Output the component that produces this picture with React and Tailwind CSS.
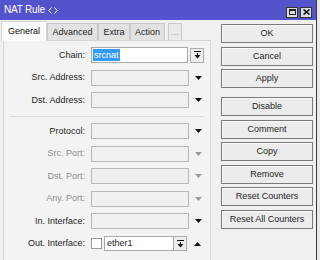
import React from 'react'

function DownArrow({ muted }) {
  return (
    <svg width="7" height="4" viewBox="0 0 7 4">
      <path d="M0 0h7L3.5 4z" fill={muted ? '#9a9a9a' : '#111'} />
    </svg>
  )
}

function UpArrow() {
  return (
    <svg width="7" height="4" viewBox="0 0 7 4">
      <path d="M0 4h7L3.5 0z" fill="#111" />
    </svg>
  )
}

function DropIcon() {
  return (
    <svg width="7" height="8" viewBox="0 0 7 8">
      <path d="M0 0.5h7" stroke="#111" strokeWidth="1" />
      <path d="M3.5 2v3" stroke="#111" strokeWidth="1" />
      <path d="M0.5 4h6L3.5 7.5z" fill="#111" />
    </svg>
  )
}

function Row({ label, muted, children }) {
  return (
    <div className="flex items-center h-[16px]">
      <span className={`w-[81px] text-right whitespace-nowrap ${muted ? 'text-[#8d8d8d]' : 'text-[#1e1e1e]'}`}>{label}</span>
      <div className="ml-[6px] flex items-center">{children}</div>
    </div>
  )
}

function EmptyField({ muted }) {
  return (
    <>
      <div className="w-[98px] h-[16px] border border-[#b9b9b9] bg-[#f0f0f0]" />
      <div className="w-[18px] flex justify-center">
        <DownArrow muted={muted} />
      </div>
    </>
  )
}

function Btn({ children }) {
  return (
    <div className="h-[19px] w-[92px] border border-[#7a7a7a] bg-[#ececec] flex items-center justify-center text-[#1e1e1e] shadow-[inset_1px_1px_0_#fbfbfb]">
      {children}
    </div>
  )
}

function Tab({ children, w, active, dim }) {
  if (active) {
    return (
      <div className={`${w} h-[20px] bg-[#fafafa] border border-[#d2d2d2] border-b-0 flex items-center justify-center text-[#111] relative z-10 -mb-[1px]`}>
        {children}
      </div>
    )
  }
  return (
    <div className={`${w} h-[17px] border border-[#c9c9c9] border-b-0 flex items-center justify-center ${dim ? 'bg-[#e9e9e9] text-[#a0a0a0]' : 'bg-[#e2e2e2] text-[#1e1e1e]'}`}>
      {children}
    </div>
  )
}

export default function App() {
  return (
    <div className="w-[320px] h-[260px] overflow-hidden flex bg-[#f0f0f0] font-['Liberation_Sans',Arial,sans-serif] text-[9px] leading-none">
      <div className="w-[317px] flex flex-col border-r border-[#3a3a3a] shrink-0">
        <div className="h-[20px] bg-[#5353cc] flex items-center pl-[4px] pr-[4px] shrink-0">
          <span className="text-white text-[10px] tracking-[-0.2px]">NAT Rule</span>
          <svg className="ml-[3px]" width="10" height="7" viewBox="0 0 10 7">
            <path d="M3.5 0.5L0.8 3.5L3.5 6.5M6.5 0.5L9.2 3.5L6.5 6.5" stroke="#fff" strokeWidth="1" fill="none" />
          </svg>
          <div className="ml-auto flex gap-[2px] mt-[4px]">
            <div className="w-[12px] h-[11px] bg-[#dcdcdc] border border-[#333] flex items-center justify-center">
              <div className="w-[7px] h-[6px] border border-[#222] border-t-2" />
            </div>
            <div className="w-[12px] h-[11px] bg-[#dcdcdc] border border-[#333] flex items-center justify-center">
              <svg width="7" height="6" viewBox="0 0 7 6">
                <path d="M0.5 0.5L6.5 5.5M6.5 0.5L0.5 5.5" stroke="#111" strokeWidth="1.6" />
              </svg>
            </div>
          </div>
        </div>
        <div className="flex flex-1 min-h-0">
          <div className="w-[211px] pl-[1px] flex flex-col">
            <div className="h-[20px] flex items-end shrink-0">
              <Tab w="w-[46px]" active>General</Tab>
              <Tab w="w-[51px]">Advanced</Tab>
              <Tab w="w-[32px]">Extra</Tab>
              <Tab w="w-[35px]">Action</Tab>
              <div className="ml-[3px]">
                <Tab w="w-[14px]" dim>...</Tab>
              </div>
            </div>
            <div className="ml-[2px] flex-1 border border-[#d6d6d6] border-b-0 bg-[#f3f3f3] pt-[6px] flex flex-col">
              <div className="flex flex-col gap-[6.5px]">
                <Row label="Chain:">
                  <div className="w-[97px] h-[16px] border border-[#a9a9a9] bg-white flex items-center pl-[1px]">
                    <span className="bg-[#3399ff] text-white px-[1px] h-[12px] flex items-center">srcnat</span>
                  </div>
                  <div className="ml-[2px] w-[14px] h-[15px] border border-[#adadad] bg-[#eeeeee] flex items-center justify-center">
                    <DropIcon />
                  </div>
                </Row>
                <Row label="Src. Address:">
                  <EmptyField />
                </Row>
                <Row label="Dst. Address:">
                  <EmptyField />
                </Row>
              </div>
              <div className="mx-[6px] mt-[8px] mb-[6px] border-t border-[#dadada]" />
              <div className="flex flex-col gap-[6.5px]">
                <Row label="Protocol:">
                  <EmptyField />
                </Row>
                <Row label="Src. Port:" muted>
                  <EmptyField muted />
                </Row>
                <Row label="Dst. Port:" muted>
                  <EmptyField muted />
                </Row>
                <Row label="Any. Port:" muted>
                  <EmptyField muted />
                </Row>
                <Row label="In. Interface:">
                  <EmptyField />
                </Row>
                <Row label="Out. Interface:">
                  <div className="w-[11px] h-[11px] border border-[#9a9a9a] bg-white" />
                  <div className="ml-[2px] w-[70px] h-[15px] border border-[#a9a9a9] bg-white flex items-center pl-[2px] text-[#1e1e1e]">ether1</div>
                  <div className="w-[13px] h-[15px] border border-[#adadad] border-l-0 bg-[#eeeeee] flex items-center justify-center">
                    <DropIcon />
                  </div>
                  <div className="w-[20px] flex justify-center">
                    <UpArrow />
                  </div>
                </Row>
              </div>
              <div className="mx-[6px] mt-[8px] border-t border-[#dadada]" />
            </div>
          </div>
          <div className="pl-[10px] pt-[4px] flex flex-col">
            <div className="flex flex-col gap-[3.5px]">
              <Btn>OK</Btn>
              <Btn>Cancel</Btn>
              <Btn>Apply</Btn>
            </div>
            <div className="mt-[9px] flex flex-col gap-[3.5px]">
              <Btn>Disable</Btn>
              <Btn>Comment</Btn>
              <Btn>Copy</Btn>
              <Btn>Remove</Btn>
              <Btn>Reset Counters</Btn>
              <Btn>Reset All Counters</Btn>
            </div>
          </div>
        </div>
      </div>
      <div className="flex-1 bg-[#e8e8e8]" />
    </div>
  )
}
